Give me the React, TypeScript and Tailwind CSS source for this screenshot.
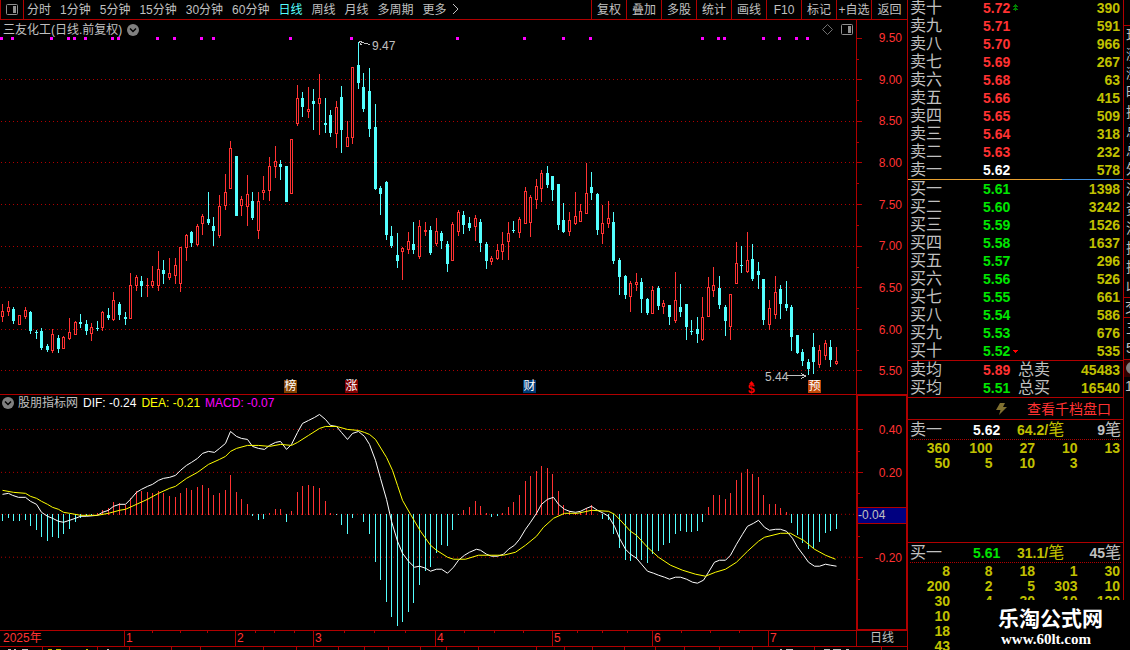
import React from 'react';
import clsx from 'clsx';

const PERIODS = ['分时', '1分钟', '5分钟', '15分钟', '30分钟', '60分钟', '日线', '周线', '月线', '多周期', '更多'];
const TOOLS = ['复权', '叠加', '多股', '统计', '画线', 'F10', '标记', '+自选', '返回'];

const PRICE_LABELS = ['9.50', '9.00', '8.50', '8.00', '7.50', '7.00', '6.50', '6.00', '5.50'];

const SELLS = [
  ['卖十', '5.72', '390'],
  ['卖九', '5.71', '591'],
  ['卖八', '5.70', '966'],
  ['卖七', '5.69', '267'],
  ['卖六', '5.68', '63'],
  ['卖五', '5.66', '415'],
  ['卖四', '5.65', '509'],
  ['卖三', '5.64', '318'],
  ['卖二', '5.63', '232'],
  ['卖一', '5.62', '578'],
];

const BUYS = [
  ['买一', '5.61', '1398'],
  ['买二', '5.60', '3242'],
  ['买三', '5.59', '1526'],
  ['买四', '5.58', '1637'],
  ['买五', '5.57', '296'],
  ['买六', '5.56', '526'],
  ['买七', '5.55', '661'],
  ['买八', '5.54', '586'],
  ['买九', '5.53', '676'],
  ['买十', '5.52', '535'],
];

const SELL_QUEUE = [
  ['360', '100', '27', '10', '13'],
  ['50', '5', '10', '3', ''],
];

const BUY_QUEUE = [
  ['8', '8', '18', '1', '30'],
  ['200', '2', '5', '303', '10'],
  ['30', '4', '30', '10', '120'],
  ['10', '', '', '', ''],
  ['18', '', '', '', ''],
  ['43', '', '', '', ''],
];

// u = up day, d = down day; then high, body top, body bottom, low
const CANDLES = `
u 304 311 317 322|u 301 307 312 316|d 307 309 321 324|u 315 315 325 325|u 307 310 317 319|d 311 312 331 334
d 330 332 333 339|d 328 331 348 350|d 344 346 350 352|u 329 334 351 353|d 335 338 349 353|u 336 337 349 349
u 318 332 339 340|u 321 322 335 335|d 314 322 324 328|d 320 324 331 335|u 323 327 334 341|d 321 328 329 331
u 311 312 328 331|d 308 315 318 320|u 292 300 320 321|d 302 304 315 320|d 312 317 319 325|u 273 285 319 319
u 275 277 286 291|d 276 281 286 297|u 278 285 286 297|u 266 281 286 288|u 251 269 286 291|d 260 270 274 284
u 258 273 278 280|u 258 265 276 284|u 247 247 284 292|u 234 235 248 261|d 231 232 243 247|u 224 226 245 246
u 214 216 224 235|d 192 219 223 225|d 217 226 231 246|u 195 206 236 238|u 174 192 206 210|u 141 148 189 189
d 156 156 216 216|u 196 199 206 216|u 175 194 207 226|d 192 201 218 220|u 192 201 231 239|u 176 190 193 200
u 157 166 191 201|u 146 161 167 178|d 160 164 167 180|d 166 166 202 202|u 139 139 194 194|u 85 98 124 126
d 92 98 107 117|u 87 109 112 118|d 89 101 104 130|u 74 98 104 135|d 98 123 125 133|d 110 115 133 137
u 101 107 134 148|d 86 97 130 153|u 121 137 147 147|u 67 67 138 144|d 42 65 83 89|d 73 87 109 112
d 68 91 129 137|d 104 127 189 190|d 186 188 194 215|d 181 182 235 240|d 226 236 246 248|d 233 255 261 268
u 247 248 252 280|u 232 241 250 254|d 222 244 250 254|u 220 226 257 259|u 222 230 232 236|d 226 230 253 255
u 218 231 244 246|d 231 233 241 249|d 241 244 264 272|u 222 224 261 261|u 210 212 232 236|d 211 215 225 234
d 217 223 228 231|u 215 218 227 241|d 219 222 243 252|d 242 244 261 269|u 256 258 262 265|u 244 250 259 260
u 232 244 252 260|u 222 233 242 260|d 221 230 231 233|u 217 219 233 238|u 187 191 224 224|u 195 197 223 237
u 179 186 200 209|u 170 173 189 202|d 166 173 185 188|d 176 176 190 201|d 184 184 225 230|d 203 220 232 233
u 212 220 232 236|u 192 216 224 225|u 204 211 222 222|u 163 193 214 214|d 172 187 193 200|d 193 194 230 235
u 205 223 234 244|u 201 218 224 228|d 212 222 261 264|d 258 260 277 295|d 275 276 295 299|u 281 283 297 312
u 273 282 285 291|d 278 282 299 313|d 298 299 313 315|u 286 290 314 314|d 286 288 306 310|u 300 303 307 314
d 305 305 317 325|u 272 300 321 323|d 284 307 312 317|d 304 304 327 340|d 320 331 332 335|d 317 329 334 343
u 297 317 340 341|u 277 287 317 317|u 267 285 291 297|d 276 288 305 309|d 305 307 321 336|u 294 294 327 340
u 242 263 284 284|d 246 265 266 273|u 232 260 272 273|d 244 259 279 281|d 262 271 275 289|d 279 279 320 325
u 300 308 325 330|u 276 292 315 319|d 285 289 304 319|d 281 304 308 311|d 305 307 337 351|d 335 335 353 354
d 349 352 361 366|d 359 362 369 375|d 333 347 362 374|u 345 350 365 368|u 340 343 356 360|d 340 347 360 367
u 347 361 364 365`
  .trim()
  .split(/[|\n]/)
  .map((row) => {
    const [kind, ...v] = row.split(' ');
    const [high, top, bottom, low] = v.map(Number);
    return { up: kind === 'u', high, top, bottom, low };
  });

// bar ends, zero axis is 514
const MACD = [
  521, 518, 521, 521, 520, 526, 530, 537, 541, 537, 538, 534, 529, 522, 518, 516, 515, 513, 510, 508, 502, 503, 505, 498,
  491, 491, 492, 493, 491, 493, 496, 497, 493, 488, 490, 487, 485, 488, 495, 493, 490, 475, 492, 499, 504, 516, 520, 519,
  513, 509, 509, 522, 511, 492, 486, 485, 486, 488, 501, 513, 515, 525, 534, 518, 514, 522, 534, 562, 580, 602, 617, 626,
  622, 612, 603, 585, 571, 567, 553, 545, 546, 530, 515, 510, 507, 501, 506, 513, 517, 516, 513, 507, 502, 495, 481, 476,
  471, 466, 468, 474, 491, 505, 511, 513, 512, 508, 505, 514, 519, 520, 534, 548, 560, 561, 559, 560, 563, 554, 551, 545,
  543, 534, 531, 532, 532, 531, 522, 507, 495, 495, 499, 493, 480, 473, 469, 474, 477, 495, 504, 504, 508, 512, 523, 535,
  543, 549, 548, 542, 533, 531, 529,
];

const DIF =
  '2,494 8,493 12,495 18,497 25,497 30,501 36,504 41,512 47,516 52,518 58,521 63,522 69,520 75,518 80,516 86,516 97,515 102,512 108,510 113,506 119,504 125,504 130,499 136,492 141,489 147,486 152,484 158,480 163,478 169,477 175,475 180,470 186,465 191,462 197,458 202,453 208,451 214,452 219,448 225,443 230,431 236,436 241,438 247,439 252,446 258,448 264,449 269,445 275,442 280,441 286,449 291,444 297,432 302,423 308,420 314,417 319,414 325,419 330,425 336,426 341,432 347,439 352,433 358,431 364,436 369,444 375,460 380,478 386,499 391,521 397,541 402,553 408,561 414,567 419,566 425,568 430,571 436,569 441,569 447,573 453,567 458,560 464,555 469,552 476,549 480,550 486,554 491,556 497,556 503,554 508,549 514,545 519,539 525,529 530,522 536,513 541,504 547,499 553,497 558,504 564,509 569,511 575,512 580,511 586,508 591,506 597,510 603,513 608,516 614,526 619,538 625,549 630,554 636,558 641,564 647,571 653,573 658,575 664,577 669,579 675,577 680,577 686,579 692,582 697,583 703,580 708,572 714,562 719,560 725,560 730,555 736,544 742,534 747,526 753,523 758,520 764,527 769,530 775,529 780,529 786,531 792,538 797,547 803,555 808,562 814,566 819,566 825,564 830,565 836,566';
const DEA =
  '2,490 13,492 25,493 30,496 36,498 41,501 47,504 52,507 58,509 63,512 69,513 80,515 97,515 108,513 119,510 125,509 136,504 147,499 158,493 169,488 175,486 186,478 197,472 208,464 219,459 225,456 230,451 236,448 247,445 258,445 269,446 280,444 291,445 297,442 308,435 319,428 325,426 336,426 347,429 358,430 364,432 369,434 375,439 386,457 392,470 397,485 402,500 410,514 420,531 430,545 436,550 447,557 453,559 465,559 478,555 503,555 515,552 525,545 536,536 543,527 553,518 564,513 577,513 591,510 608,511 614,514 619,519 630,531 636,535 647,547 658,557 670,565 682,570 695,574 705,576 715,572 725,569 736,562 747,551 758,541 764,537 780,533 790,533 797,537 803,540 814,549 825,555 835,559';

const SIGNALS = [1, 12, 51, 68, 74, 85, 112, 118, 157, 174, 201, 213, 290, 351, 457, 524, 563, 590, 702, 718, 724, 763, 779, 796, 807];

const MONTHS = [
  { label: '2025年', span: 124 },
  { label: '1', span: 111 },
  { label: '2', span: 78 },
  { label: '3', span: 122 },
  { label: '4', span: 117 },
  { label: '5', span: 100 },
  { label: '6', span: 116 },
  { label: '7', span: 88 },
];
const WEEK_TICKS = [152, 180, 207, 255, 274, 294, 344, 374, 405, 464, 494, 523, 577, 602, 627, 681, 710, 739];
const FOOT_TABS = [42, 97, 129, 171, 200, 263, 296, 338, 364, 388, 420, 446, 478, 536, 564, 592, 624, 655, 684, 719, 752, 814, 881];
const FOOT_MARKS = [
  [8, 3, 'gray'], [14, 2, 'gray'], [22, 6, 'gray'], [48, 4, 'yellow'], [56, 5, 'yellow'], [86, 2, 'yellow'],
  [107, 2, 'gray'], [780, 2, 'gray'], [786, 7, 'gray'], [824, 6, 'gray'], [833, 8, 'gray'], [846, 3, 'gray'],
] as const;

const EVENTS = [
  { text: '榜', x: 284, color: 'bg-[#804000]' },
  { text: '涨', x: 345, color: 'bg-[#800000]' },
  { text: '财', x: 523, color: 'bg-[#003a75]' },
  { text: '预', x: 808, color: 'bg-[#c04808]' },
];

const CHART_W = 856;
const barX = (i: number) => Math.floor(2.85 + (i * 50) / 9);
const pct = (x: number) => `${(x / CHART_W) * 100}%`;

const PanelIcon: React.FC<{ className?: string }> = ({ className }) => (
  <svg width="12" height="11" viewBox="0 0 12 11" className={className} aria-hidden="true">
    <rect x="0.5" y="0.5" width="11" height="10" rx="1" fill="none" stroke="#909090" />
    <rect x="7" y="2" width="3" height="7" fill="#909090" />
  </svg>
);

const CollapseButton: React.FC<{ label: string }> = ({ label }) => (
  <button aria-label={label} className="shrink-0">
    <svg width="12" height="12" viewBox="0 0 12 12">
      <circle cx="6" cy="6" r="6" fill="#808080" />
      <path d="M3 4.5 L6 7.5 L9 4.5" fill="none" stroke="#000" strokeWidth="1.5" />
    </svg>
  </button>
);

const Toolbar: React.FC = () => (
  <header className="flex h-5 shrink-0 border-b border-[#b00000] leading-[18px]">
    <button aria-label="切换面板" className="flex w-6 shrink-0 items-center justify-center border-x border-[#b00000]">
      <PanelIcon />
    </button>
    <nav className="flex min-w-0 flex-1 gap-[9px] overflow-hidden whitespace-nowrap pl-[3px]">
      {PERIODS.map((p) => (
        <button key={p} className={p === '日线' ? 'text-[#54ffff]' : undefined}>
          {p}
        </button>
      ))}
      <svg width="7" height="19" viewBox="0 0 7 19" className="-ml-1" aria-hidden="true">
        <path d="M1 4 L6 9 L1 14" fill="none" stroke="#c0c0c0" />
      </svg>
    </nav>
    <div className="flex shrink-0">
      {TOOLS.map((t) => (
        <button key={t} className="w-[35px] whitespace-nowrap border-l border-[#b00000] text-center last:w-9">
          {t}
        </button>
      ))}
    </div>
  </header>
);

const GridLines: React.FC<{ rows: number[] }> = ({ rows }) => (
  <>
    {rows.map((y) => (
      <line key={y} x1="1" x2={CHART_W - 2} y1={y + 0.5} y2={y + 0.5} stroke="#b00000" strokeDasharray="1 3" />
    ))}
  </>
);

const CandleChart: React.FC = () => (
  <div className="relative min-w-0 flex-1">
    <svg
      className="absolute inset-0 h-full w-full"
      viewBox="0 20 856 374"
      preserveAspectRatio="none"
      shapeRendering="crispEdges"
      role="img"
      aria-label="日K线"
    >
      <GridLines rows={[79, 121, 162, 204, 246, 287, 329, 370]} />
      {SIGNALS.map((x) => (
        <rect key={x} x={x - 1} y="37" width="3" height="3" fill="#ff00ff" />
      ))}
      {CANDLES.map((c, i) => {
        const x = barX(i);
        const h = Math.max(c.bottom - c.top, 1);
        if (!c.up) {
          return (
            <g key={i} fill="#54ffff">
              <rect x={x} y={c.high} width="1" height={c.low - c.high} />
              <rect x={x - 1} y={c.top} width="3" height={h} />
            </g>
          );
        }
        return (
          <g key={i} fill="#ff3232">
            <rect x={x} y={c.high} width="1" height={c.low - c.high} />
            <rect x={x - 1} y={c.top} width="3" height={h} />
            {h > 2 && <rect x={x} y={c.top + 1} width="1" height={h - 2} fill="#000" />}
          </g>
        );
      })}
      <path d="M358.5 41.5 H362 M359 41.5 L370 44.5 M359 42 L361.5 45" fill="none" stroke="#c0c0c0" />
      <path d="M787 375.5 H806 M801 373 L806 375.5 L801 378" fill="none" stroke="#c0c0c0" />
    </svg>

    <div className="relative flex h-[19px] items-center justify-between pl-[3px] pr-[3px]">
      <div className="flex items-center gap-[5px]">
        <h1>三友化工(日线.前复权)</h1>
        <CollapseButton label="展开主图" />
      </div>
      <div className="flex items-center gap-2">
        <svg width="11" height="11" viewBox="0 0 11 11" aria-hidden="true">
          <path d="M5.5 0.5 L10.5 5.5 L5.5 10.5 L0.5 5.5 Z" fill="none" stroke="#707070" />
        </svg>
        <PanelIcon />
      </div>
    </div>

    <span className="absolute top-[18px] leading-4" style={{ left: pct(372) }}>9.47</span>
    <span className="absolute bottom-[9px] leading-4" style={{ left: pct(765) }}>5.44</span>
    {EVENTS.map((e) => (
      <span
        key={e.text}
        className={clsx('absolute bottom-px h-[13px] w-[13px] text-center leading-[12px] text-white', e.color)}
        style={{ left: pct(e.x) }}
      >
        {e.text}
      </span>
    ))}
    <span className="absolute bottom-0 font-bold leading-[10px] text-[#ff0000]" style={{ left: pct(748) }}>$</span>
    <svg className="absolute bottom-[10px]" width="5" height="3" viewBox="0 0 5 3" style={{ left: pct(749) }} aria-hidden="true">
      <path d="M2.5 0 L5 3 H0 Z" fill="#ff0000" />
    </svg>
  </div>
);

const AxisTicks: React.FC<{ major: number[]; minor: number[]; viewBox: string }> = ({ major, minor, viewBox }) => (
  <svg className="absolute left-0 top-0 h-full w-[5px]" viewBox={viewBox} preserveAspectRatio="none" shapeRendering="crispEdges" aria-hidden="true">
    {major.map((y) => (
      <rect key={y} x="0" y={y} width="5" height="1" fill="#b00000" />
    ))}
    {minor.map((y) => (
      <rect key={y} x="0" y={y} width="2" height="1" fill="#b00000" />
    ))}
  </svg>
);

const MacdChart: React.FC = () => (
  <div className="relative min-w-0 flex-1">
    <svg
      className="absolute inset-0 h-full w-full"
      viewBox="0 395 856 235"
      preserveAspectRatio="none"
      shapeRendering="crispEdges"
      role="img"
      aria-label="MACD"
    >
      <GridLines rows={[429, 472, 514, 557]} />
      {MACD.map((y, i) =>
        y < 514 ? (
          <rect key={i} x={barX(i)} y={y} width="1" height={515 - y} fill="#ff3232" />
        ) : (
          <rect key={i} x={barX(i)} y="514" width="1" height={y - 514} fill="#54ffff" />
        ),
      )}
      <polyline points={DIF} transform="translate(0.5 0.5)" fill="none" stroke="#fff" />
      <polyline points={DEA} transform="translate(0.5 0.5)" fill="none" stroke="#ff0" />
    </svg>
    <div className="relative flex h-4 items-center gap-[5px] whitespace-nowrap pl-[2px]">
      <div className="flex items-center gap-1">
        <CollapseButton label="展开副图" />
        <h2>股朋指标网</h2>
      </div>
      <span className="text-white">DIF: -0.24</span>
      <span className="text-[#ffff00]">DEA: -0.21</span>
      <span className="text-[#ff00ff]">MACD: -0.07</span>
    </div>
  </div>
);

const TimeAxis: React.FC = () => (
  <div className="flex h-[17px] shrink-0 border-y border-[#b00000] leading-[15px]">
    <div className="relative flex min-w-0 flex-1 text-[#ff3232]">
      <svg className="absolute left-0 top-0 h-[2px] w-full" viewBox="0 0 856 2" preserveAspectRatio="none" shapeRendering="crispEdges" aria-hidden="true">
        {WEEK_TICKS.map((x) => (
          <rect key={x} x={x} y="0" width="1" height="2" fill="#b00000" />
        ))}
      </svg>
      {MONTHS.map((m, i) => (
        <span
          key={m.label}
          className={clsx('whitespace-nowrap', i === 0 ? 'pl-[3px]' : 'border-l border-[#b00000] pl-px')}
          style={{ width: pct(m.span) }}
        >
          {m.label}
        </span>
      ))}
    </div>
    <div className="w-[51px] shrink-0 border-l border-[#b00000] text-center">日线</div>
  </div>
);

const FootStrip: React.FC = () => (
  <svg className="h-[3px] w-full shrink-0" viewBox="0 0 907 3" preserveAspectRatio="none" shapeRendering="crispEdges" aria-hidden="true">
    {FOOT_TABS.map((x) => (
      <rect key={x} x={x} y="0" width="1" height="3" fill="#b00000" />
    ))}
    {FOOT_MARKS.map(([x, w, tone]) => (
      <rect key={x} x={x} y="2" width={w} height="1" fill={tone === 'gray' ? '#c0c0c0' : '#c0c000'} />
    ))}
  </svg>
);

const BookTable: React.FC<{ rows: string[][]; label: string; tone: string }> = ({ rows, label, tone }) => (
  <table className="w-full table-fixed border-collapse leading-[18px]" aria-label={label}>
    <tbody>
      {rows.map(([name, price, volume]) => (
        <tr key={name} className="h-[18px]">
          <th scope="row" className="w-[75px] p-0 pl-[2px] text-left text-base font-normal leading-[18px]">{name}</th>
          <td className={clsx('p-0 text-sm font-bold leading-[18px]', name === '卖一' ? 'text-white' : tone)}>
            {price}
            {name === '卖十' && (
              <svg className="ml-[3px] inline align-[2px]" width="5" height="7" viewBox="0 0 5 7" shapeRendering="crispEdges" aria-hidden="true">
                <path d="M2 0h1v1h1v1h1v1H0V2h1V1h1z M2 3h1v1h1v1h1v1H0V5h1V4h1z M2 6h1v1H2z" fill="#008000" />
              </svg>
            )}
            {name === '买十' && (
              <svg className="ml-[3px] inline align-[3px]" width="5" height="3" viewBox="0 0 5 3" shapeRendering="crispEdges" aria-hidden="true">
                <path d="M0 0h5v1h-1v1h-1v1h-1v-1h-1v-1h-1z" fill="#ff0000" />
              </svg>
            )}
          </td>
          <td className="w-[60px] p-0 pr-[3px] text-right text-sm font-bold leading-[18px] text-[#c0c000]">{volume}</td>
        </tr>
      ))}
    </tbody>
  </table>
);

const AverageRow: React.FC<{ name: string; price: string; total: string; volume: string; tone: string }> = (p) => (
  <tr className="h-[18px]">
    <th scope="row" className="w-[75px] p-0 pl-[2px] text-left text-base font-normal leading-[18px]">{p.name}</th>
    <td className={clsx('w-[35px] p-0 text-sm font-bold leading-[18px]', p.tone)}>{p.price}</td>
    <th scope="row" className="p-0 text-left text-base font-normal leading-[18px]">{p.total}</th>
    <td className="p-0 pr-[3px] text-right text-sm font-bold leading-[18px] text-[#c0c000]">{p.volume}</td>
  </tr>
);

type QueueProps = { name: string; price: string; tone: string; average: string; count: string; rows: string[][] };

const Queue: React.FC<QueueProps> = ({ name, price, tone, average, count, rows }) => (
  <>
    <div className="mx-[2px] flex h-5 items-center border-b border-dotted border-[#b00000] text-sm font-bold leading-[18px]">
      <span className="w-[63px] text-base font-normal">{name}</span>
      <span className={clsx('w-11', tone)}>{price}</span>
      <span className="flex-1 text-[#c0c000]">
        {average}/<span className="text-base font-normal leading-[18px]">笔</span>
      </span>
      <span>
        {count}
        <span className="text-base font-normal leading-[18px]">笔</span>
      </span>
    </div>
    <table className="mt-px w-full table-fixed text-right text-sm font-bold leading-[15px] text-[#c0c000]" aria-label={`${name}队列`}>
      <tbody>
        {rows.map((row, r) => (
          <tr key={r} className="h-[15px]">
            {row.map((v, i) => (
              <td key={i} className="p-0 pr-[3px] leading-[15px] first:w-[45px]">{v}</td>
            ))}
          </tr>
        ))}
      </tbody>
    </table>
  </>
);

const OrderBook: React.FC = () => (
  <aside className="flex w-[217px] shrink-0 flex-col overflow-hidden border-x border-[#b00000]">
    <div className="-mt-px">
      <BookTable rows={SELLS} label="卖盘" tone="text-[#ff3232]" />
    </div>
    <div className="flex h-px shrink-0">
      <div className="flex-[154] bg-[#e8a030]" />
      <div className="flex-[61] bg-[#4090e0]" />
    </div>
    <BookTable rows={BUYS} label="买盘" tone="text-[#00e600]" />
    <div className="border-y border-[#b00000]">
      <table className="w-full table-fixed" aria-label="均价">
        <tbody>
          <AverageRow name="卖均" price="5.89" total="总卖" volume="45483" tone="text-[#ff3232]" />
          <AverageRow name="买均" price="5.51" total="总买" volume="16540" tone="text-[#00e600]" />
        </tbody>
      </table>
    </div>
    <div className="flex h-[22px] shrink-0 items-center justify-end gap-5 border-b border-[#b00000] pr-3">
      <svg width="11" height="12" viewBox="0 0 11 12" aria-hidden="true">
        <path d="M4 0 H9 L7 4 H11 L3 12 L4.5 7 H0 Z" fill="#807030" />
      </svg>
      <a href="#depth" className="text-sm leading-5 text-[#ff3232]">查看千档盘口</a>
    </div>
    <section className="h-[123px] shrink-0 border-b border-[#b00000]">
      <Queue name="卖一" price="5.62" tone="text-white" average="64.2" count="9" rows={SELL_QUEUE} />
    </section>
    <section className="min-h-0 flex-1 overflow-hidden">
      <Queue name="买一" price="5.61" tone="text-[#00e600]" average="31.1" count="45" rows={BUY_QUEUE} />
    </section>
  </aside>
);

// Quote column, only its left edge fits in the window
const QuoteEdge: React.FC = () => (
  <aside className="w-[6px] shrink-0 overflow-hidden text-sm">
    <div className="h-[26px] border-b border-[#b00000]" />
    <div className="flex h-[154px] flex-col justify-between border-b border-[#b00000] pl-[2px] leading-[19px]">
      {['现', '涨', '涨', '昨', '换', '总', '总', '外'].map((t, i) => (
        <span key={i} className="w-4">{t}</span>
      ))}
    </div>
    <div className="flex h-[118px] flex-col justify-between border-b border-[#b00000] pl-[2px] leading-[19px]">
      {['流', '资', '流', '换', '换', '收'].map((t, i) => (
        <span key={i} className="w-4">{t}</span>
      ))}
    </div>
    <div className="h-5 border-b border-[#b00000] pl-px leading-[19px]">
      <span className="block w-4">交</span>
    </div>
    <div className="h-[42px] border-b border-[#b00000] pl-[2px] leading-[20px]">
      <span className="block w-4">五</span>
      <span className="block w-4">5</span>
    </div>
    <div className="h-[17px] bg-[#300000] pl-[2px] pt-[2px]">
      <div className="h-3 w-3 rounded-full bg-[#808080]" />
    </div>
    <span className="block w-4 pl-px leading-[18px]">1</span>
  </aside>
);

export default function App() {
  return (
    <div className="relative flex h-screen overflow-hidden bg-black font-['Liberation_Sans','Noto_Sans_CJK_SC',sans-serif] text-xs text-[#c0c0c0]">
      <main className="flex min-w-0 flex-1 flex-col">
        <Toolbar />
        <section className="flex min-h-0 flex-[375_1_0%] border-b border-[#b00000]">
          <CandleChart />
          <div className="relative flex w-[51px] shrink-0 flex-col justify-between border-l border-[#b00000] pb-[15px] pr-[5px] pt-[10px] text-right leading-4 text-[#ff3232]">
            <AxisTicks
              viewBox="0 20 5 374"
              major={[38, 79, 121, 162, 204, 246, 287, 329, 370]}
              minor={[59, 100, 142, 183, 225, 267, 308, 350]}
            />
            {PRICE_LABELS.map((p) => (
              <span key={p}>{p}</span>
            ))}
          </div>
        </section>
        <section className="flex min-h-0 flex-[235_1_0%]">
          <MacdChart />
          <div className="flex w-[51px] shrink-0 border-l border-[#b00000]">
            <div className="relative flex flex-1 flex-col justify-between border border-[#b00000] pb-[62px] pt-[26px] text-right leading-[15px] text-[#ff3232]">
              <AxisTicks viewBox="0 396 5 233" major={[429, 472, 557]} minor={[451, 493, 536, 579]} />
              <span className="py-px pr-1">0.40</span>
              <span className="py-px pr-1">0.20</span>
              <span className="relative border-y border-[#b00000] bg-[#000080] text-left text-[#c0c0c0]">-0.04</span>
              <span className="py-px pr-1">-0.20</span>
            </div>
          </div>
        </section>
        <TimeAxis />
        <FootStrip />
      </main>
      <OrderBook />
      <QuoteEdge />

      <div className="absolute bottom-0 right-0 h-[50px] w-[151px] bg-black pt-[7px] text-white">
        <p className="pl-[19px] text-[21px] font-bold leading-6">乐淘公式网</p>
        <p className="pl-[22px] font-['Liberation_Serif',serif] text-[15px] font-bold leading-4">www.60lt.com</p>
      </div>
    </div>
  );
}
